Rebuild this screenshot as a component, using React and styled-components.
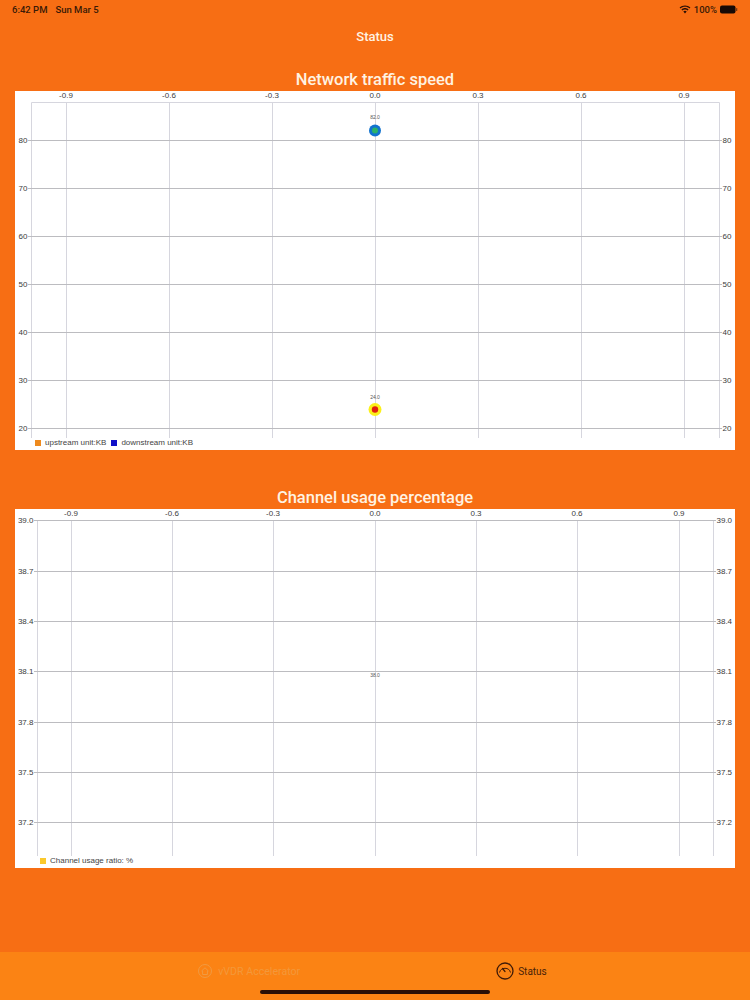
import React from "react";
import styled, { createGlobalStyle } from "styled-components";

const Global = createGlobalStyle`
  html, body { margin: 0; padding: 0; background: #f76e14; }
  #root { width: 750px; height: 1000px; overflow: hidden; }
  * { box-sizing: border-box; }
`;

const Page = styled.div`
  width: 750px;
  height: 1000px;
  display: flex;
  flex-direction: column;
  background: #f76e14;
  font-family: Roboto, "Liberation Sans", sans-serif;
`;
const StatusBar = styled.div`
  height: 18px;
  padding: 0 12px;
  display: flex;
  justify-content: space-between;
  align-items: center;
  font-size: 9.5px;
  color: #3a1a06;
`;
const StatusLeft = styled.div`
  display: flex;
  gap: 8px;
  font-weight: 500;
`;
const StatusRight = styled.div`
  display: flex;
  align-items: center;
  gap: 3px;
  font-weight: 500;
`;
const NavBar = styled.div`
  height: 36px;
  display: flex;
  align-items: center;
  justify-content: center;
  color: #fff3e2;
  font-size: 13px;
  font-weight: 500;
`;
const Content = styled.main`
  flex: 1;
  padding-top: 14px;
  display: flex;
  flex-direction: column;
  gap: 36px;
`;
const Section = styled.section`
  display: flex;
  flex-direction: column;
`;
const Title = styled.h2`
  margin: 0;
  height: 23px;
  line-height: 23px;
  text-align: center;
  color: #fff3e2;
  font-size: 16.5px;
  font-weight: 500;
`;
const Card = styled.div`
  margin: 0 15px;
  height: 359px;
  background: #fff;
  display: flex;
  flex-direction: column;
`;
const Plot = styled.svg`
  display: block;
  flex: none;
`;
const Legend = styled.div`
  height: 9px;
  display: flex;
  align-items: center;
  gap: 5px;
  padding-left: ${(p) => p.$left}px;
  font-family: "Liberation Sans", sans-serif;
  font-size: 8px;
  color: #444;
`;
const LegendItem = styled.div`
  display: flex;
  align-items: center;
  gap: 4px;
`;
const Swatch = styled.span`
  width: 6px;
  height: 6px;
  background: ${(p) => p.$color};
`;
const TabBar = styled.nav`
  position: relative;
  height: 48px;
  padding: 0 5px 10px 0;
  flex: none;
  background: #fb8314;
  display: flex;
  align-items: center;
  justify-content: center;
  gap: 196px;
`;
const Tab = styled.div`
  display: flex;
  align-items: center;
  gap: ${(p) => (p.$active ? 4 : 6)}px;
  font-size: ${(p) => (p.$active ? 10 : 10.6)}px;
  color: ${(p) => (p.$active ? "#4a2208" : "#f3983a")};
`;
const HomeIndicator = styled.div`
  position: absolute;
  left: 260px;
  bottom: 6px;
  width: 230px;
  height: 4px;
  border-radius: 2px;
  background: #2a0f06;
`;

const vColor = "#d6d6de";
const hColor = "#bcbcc0";
const labelColor = "#3c3c3c";

function Chart({ plot, xTicks, yTicks, points }) {
  const { left, right, top, bottom } = plot;
  return (
    <Plot width="720" height="347" viewBox="0 0 720 347" fontFamily="'Liberation Sans', sans-serif">
      <path d={`M${left + 0.5} ${bottom}V${top + 0.5}H${right + 0.5}V${bottom}`} fill="none" stroke={vColor} strokeWidth="1" />
      {xTicks.map((t) => (
        <g key={t.label}>
          <line x1={t.x + 0.5} x2={t.x + 0.5} y1={top} y2={bottom} stroke={vColor} strokeWidth="1" />
          <text x={t.x} y={top - 4} fontSize="8" fill={labelColor} textAnchor="middle">{t.label}</text>
        </g>
      ))}
      {yTicks.map((t) => (
        <g key={t.label}>
          <line x1={left - 3} x2={right + 3} y1={t.y + 0.5} y2={t.y + 0.5} stroke={hColor} strokeWidth="1" />
          <text x={left - 3.5} y={t.y + 3} fontSize="8" fill={labelColor} textAnchor="end">{t.label}</text>
          <text x={right + 3.5} y={t.y + 3} fontSize="8" fill={labelColor}>{t.label}</text>
        </g>
      ))}
      {points.map((p) => (
        <g key={p.label}>
          <text x={p.x} y={p.labelY} fontSize="5" fill="#555" textAnchor="middle">{p.label}</text>
          {p.outer && <circle cx={p.x} cy={p.y} r={p.r} fill={p.outer} />}
          {p.inner && <circle cx={p.x} cy={p.y} r={p.ri} fill={p.inner} />}
        </g>
      ))}
    </Plot>
  );
}

const trafficPlot = { left: 16, right: 704, top: 11, bottom: 347 };
const trafficX = [
  ["-0.9", 51], ["-0.6", 154], ["-0.3", 257], ["0.0", 360], ["0.3", 463], ["0.6", 566], ["0.9", 669],
].map(([label, x]) => ({ label, x }));
const trafficY = [
  ["80", 49], ["70", 97], ["60", 145], ["50", 193], ["40", 241], ["30", 289], ["20", 337],
].map(([label, y]) => ({ label, y }));
const trafficPoints = [
  { label: "82.0", x: 360, y: 39.5, labelY: 28, r: 6, ri: 3, outer: "#1273cf", inner: "#2cb36a" },
  { label: "24.0", x: 360, y: 318.5, labelY: 307.5, r: 6.5, ri: 3.2, outer: "#fbf01a", inner: "#e0200f" },
];

const usagePlot = { left: 22, right: 698, top: 11, bottom: 347 };
const usageX = [
  ["-0.9", 56], ["-0.6", 157], ["-0.3", 258], ["0.0", 360], ["0.3", 461], ["0.6", 562], ["0.9", 664],
].map(([label, x]) => ({ label, x }));
const usageY = [
  ["39.0", 11], ["38.7", 62], ["38.4", 112], ["38.1", 162], ["37.8", 213], ["37.5", 263], ["37.2", 313],
].map(([label, y]) => ({ label, y }));
const usagePoints = [{ label: "38.0", x: 360, y: 166, labelY: 168 }];

const WifiIcon = () => (
  <svg width="12" height="9" viewBox="0 0 24 18" fill="#2a1006">
    <path d="M12 3.400c3.500 0 6.700 1.300 9.100 3.600l1.700-1.800C20 2.400 16.200.8 12 .8S4 2.400 1.200 5.200L2.900 7C5.300 4.700 8.500 3.400 12 3.400z" />
    <path d="M12 8.800c2 0 3.900.8 5.300 2.100l1.800-1.800C17.200 7.300 14.700 6.200 12 6.200S6.800 7.300 4.900 9.100l1.800 1.800C8.100 9.600 10 8.800 12 8.800z" />
    <path d="M12 11.600c-1.300 0-2.500.5-3.400 1.300L12 17l3.400-4.100c-.9-.8-2.100-1.300-3.400-1.300z" />
  </svg>
);
const BatteryIcon = () => (
  <svg width="18" height="9" viewBox="0 0 18 9">
    <rect x="0" y="0.500" width="15.500" height="8" rx="2" fill="#150a06" />
    <rect x="16" y="3" width="1.300" height="3" rx="0.600" fill="#7a3a10" />
  </svg>
);
const HomeIcon = () => (
  <svg width="14" height="14" viewBox="0 0 14 14" fill="none" stroke="#f09a42" strokeWidth="1">
    <circle cx="7" cy="7" r="6.500" />
    <path d="M3.500 7 7 3.800 10.500 7M4.600 6.500V10.500H9.400V6.500" />
  </svg>
);
const GaugeIcon = () => (
  <svg width="18" height="18" viewBox="0 0 18 18" fill="none" stroke="#3f1a08">
    <circle cx="9" cy="9" r="8" strokeWidth="1.300" />
    <path d="M3.500 10.500A5.700 5.700 0 0 1 14.500 10.500" strokeWidth="1" />
    <path d="M6.500 6.500 9 9.500" strokeWidth="1.200" strokeLinecap="round" />
  </svg>
);

export default function App() {
  return (
    <Page>
      <Global />
      <StatusBar>
        <StatusLeft>
          <span>6:42 PM</span>
          <span>Sun Mar 5</span>
        </StatusLeft>
        <StatusRight>
          <WifiIcon />
          <span>100%</span>
          <BatteryIcon />
        </StatusRight>
      </StatusBar>
      <NavBar>Status</NavBar>
      <Content>
        <Section>
          <Title>Network traffic speed</Title>
          <Card>
            <Chart plot={trafficPlot} xTicks={trafficX} yTicks={trafficY} points={trafficPoints} />
            <Legend $left={20}>
              <LegendItem><Swatch $color="#ee8a1e" />upstream unit:KB</LegendItem>
              <LegendItem><Swatch $color="#1010c8" />downstream unit:KB</LegendItem>
            </Legend>
          </Card>
        </Section>
        <Section>
          <Title>Channel usage percentage</Title>
          <Card>
            <Chart plot={usagePlot} xTicks={usageX} yTicks={usageY} points={usagePoints} />
            <Legend $left={25}>
              <LegendItem><Swatch $color="#fbc92c" />Channel usage ratio: %</LegendItem>
            </Legend>
          </Card>
        </Section>
      </Content>
      <TabBar>
        <Tab>
          <HomeIcon />
          <span>vVDR Accelerator</span>
        </Tab>
        <Tab $active>
          <GaugeIcon />
          <span>Status</span>
        </Tab>
        <HomeIndicator />
      </TabBar>
    </Page>
  );
}
